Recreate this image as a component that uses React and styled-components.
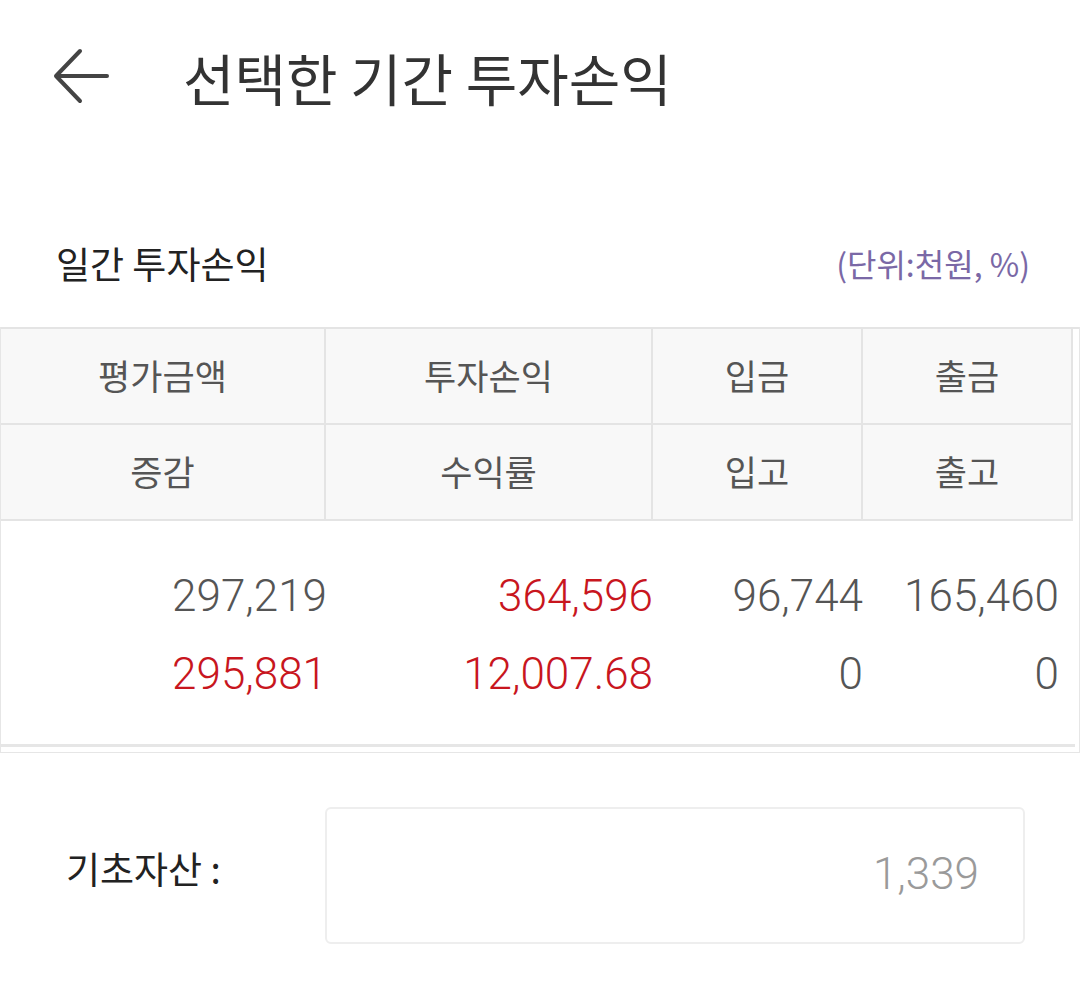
import styled, { createGlobalStyle } from "styled-components";

const GlobalStyle = createGlobalStyle`
  body {
    margin: 0;
    background: #ffffff;
    font-family: "Noto Sans CJK KR", "Noto Sans", sans-serif;
  }
`;

const headers = [
  ["평가금액", "투자손익", "입금", "출금"],
  ["증감", "수익률", "입고", "출고"],
];

const rows = [
  [
    { v: "297,219" },
    { v: "364,596", red: true },
    { v: "96,744" },
    { v: "165,460", pad: 14 },
  ],
  [
    { v: "295,881", red: true },
    { v: "12,007.68", red: true },
    { v: "0" },
    { v: "0", pad: 14 },
  ],
];

export default function App() {
  return (
    <Page>
      <GlobalStyle />
      <TopBar>
        <BackButton aria-label="뒤로">
          <svg width="58" height="58" viewBox="0 0 58 58" fill="none">
            <path d="M54 29H4" stroke="#444" strokeWidth="4" strokeLinecap="round" />
            <path d="M27 4L3 29L27 54" stroke="#444" strokeWidth="4" strokeLinecap="round" strokeLinejoin="round" />
          </svg>
        </BackButton>
        <Title>선택한 기간 투자손익</Title>
      </TopBar>

      <SectionHead>
        <SectionTitle>일간 투자손익</SectionTitle>
        <Unit>(단위:천원, %)</Unit>
      </SectionHead>

      <TableBox>
        <HeadGrid>
          {headers.flat().map((h, i) => (
            <HeadCell key={i}>{h}</HeadCell>
          ))}
        </HeadGrid>
        <DataArea>
          {rows.map((r, ri) => (
            <DataRow key={ri}>
              {r.map((c, ci) => (
                <DataCell key={ci} $red={c.red} $pad={c.pad || 0}>{c.v}</DataCell>
              ))}
            </DataRow>
          ))}
        </DataArea>
      </TableBox>

      <BaseRow>
        <BaseLabel>기초자산 :</BaseLabel>
        <BaseInput>1,339</BaseInput>
      </BaseRow>
    </Page>
  );
}

const Page = styled.div`
  width: 1080px;
  min-height: 994px;
  background: #fff;
  color: #333;
`;

const TopBar = styled.div`
  display: flex;
  align-items: center;
  height: 152px;
  padding-left: 53px;
  box-sizing: border-box;
`;

const BackButton = styled.div`
  display: flex;
  width: 58px;
  height: 58px;
  margin-right: 72px;
`;

const Title = styled.h1`
  margin: 0;
  font-size: 56px;
  font-weight: 400;
  color: #333;
`;

const SectionHead = styled.div`
  display: flex;
  justify-content: space-between;
  align-items: center;
  padding: 68px 50px 0 56px;
  height: 86px;
`;

const SectionTitle = styled.div`
  font-size: 37px;
  color: #222;
`;

const Unit = styled.div`
  font-size: 32px;
  color: #7a68a6;
`;

const TableBox = styled.div`
  margin-top: 21px;
  border: 1px solid #e6e6e6;
  border-top: none;
`;

const HeadGrid = styled.div`
  display: grid;
  grid-template-columns: 325px 327px 210px 210px;
  border-top: 2px solid #e4e4e4;
`;

const HeadCell = styled.div`
  display: flex;
  align-items: center;
  justify-content: center;
  height: 96px;
  padding-bottom: 4px;
  box-sizing: border-box;
  background: #f8f8f8;
  border-right: 2px solid #e4e4e4;
  border-bottom: 2px solid #e4e4e4;
  font-size: 35px;
  color: #555;
`;

const DataArea = styled.div`
  display: flex;
  flex-direction: column;
  gap: 22px;
  padding: 47px 0 42px;
  width: 1074px;
  border-bottom: 3px solid #e6e6e6;
  margin-bottom: 5px;
`;

const DataRow = styled.div`
  display: grid;
  grid-template-columns: 326px 326px 210px 210px;
  height: 56px;
  align-items: center;
`;

const DataCell = styled.div`
  text-align: right;
  padding-right: ${(p) => p.$pad}px;
  font-family: Roboto, "Noto Sans CJK KR", sans-serif;
  font-weight: 300;
  font-size: 44px;
  color: ${(p) => (p.$red ? "#c8161e" : "#555")};
  white-space: nowrap;
`;

const BaseRow = styled.div`
  display: flex;
  align-items: center;
  margin-top: 54px;
  padding-left: 66px;
`;

const BaseLabel = styled.div`
  width: 259px;
  font-size: 37px;
  color: #222;
  margin-top: -16px;
`;

const BaseInput = styled.div`
  display: flex;
  align-items: center;
  justify-content: flex-end;
  width: 700px;
  height: 137px;
  box-sizing: border-box;
  padding: 0 44px 4px 0;
  border: 2px solid #eeeeee;
  border-radius: 6px;
  font-family: Roboto, sans-serif;
  font-weight: 300;
  font-size: 44px;
  color: #9a9a9a;
`;
